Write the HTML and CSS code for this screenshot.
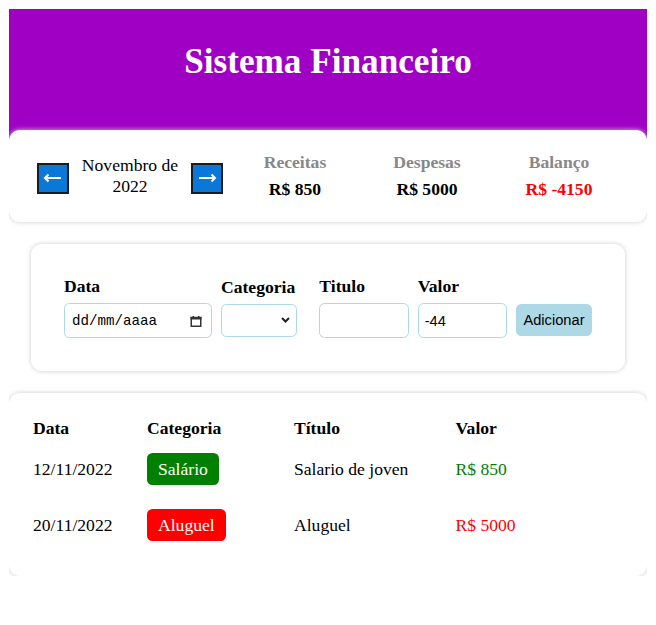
FILE: index.html
```html
<!DOCTYPE html>
<html lang="pt-BR">
<head>
<meta charset="utf-8">
<title>Sistema Financeiro</title>
<link rel="stylesheet" href="styles.css">
</head>
<body>
<header class="header">
  <h1 class="header-title">Sistema Financeiro</h1>
</header>
<main class="page">
  <section class="info-card">
    <div class="month-area">
      <div class="month-arrow">
        <span class="arrow-box">
          <svg class="arrow-icon" viewBox="0 0 28 28" width="28" height="28"><path d="M6 13H22M9.5 9.5L6 13L9.5 16.5" fill="none" stroke="#fff" stroke-width="2"/></svg>
        </span>
      </div>
      <div class="month-title">Novembro de 2022</div>
      <div class="month-arrow">
        <span class="arrow-box">
          <svg class="arrow-icon" viewBox="0 0 28 28" width="28" height="28"><path d="M6 13H22M18.5 9.5L22 13L18.5 16.5" fill="none" stroke="#fff" stroke-width="2"/></svg>
        </span>
      </div>
    </div>
    <div class="resume-area">
      <div class="resume-item">
        <div class="resume-title">Receitas</div>
        <div class="resume-info">R$ 850</div>
      </div>
      <div class="resume-item">
        <div class="resume-title">Despesas</div>
        <div class="resume-info">R$ 5000</div>
      </div>
      <div class="resume-item">
        <div class="resume-title">Balanço</div>
        <div class="resume-info negative">R$ -4150</div>
      </div>
    </div>
  </section>

  <form class="input-card">
    <label class="field field-date">
      <span class="field-title">Data</span>
      <span class="date-input">
        <span class="date-text">dd/mm/aaaa</span>
        <svg class="calendar-icon" viewBox="0 0 12 11" width="12" height="11"><path d="M1.25 1.5H10.75V10.25H1.25Z" fill="none" stroke="#333" stroke-width="1.5"/><rect x="0.5" y="1" width="11" height="2.5" fill="#333"/><rect x="2.5" y="0" width="1.5" height="1.5" fill="#333"/><rect x="8" y="0" width="1.5" height="1.5" fill="#333"/></svg>
      </span>
    </label>
    <label class="field">
      <span class="field-title">Categoria</span>
      <span class="select-wrap">
        <select class="select"><option></option></select>
        <svg class="chevron" viewBox="0 0 9 6" width="9" height="6"><path d="M1 1L4.5 4.5L8 1" fill="none" stroke="#222" stroke-width="2"/></svg>
      </span>
    </label>
    <label class="field">
      <span class="field-title">Titulo</span>
      <input class="text-input" type="text">
    </label>
    <label class="field">
      <span class="field-title">Valor</span>
      <input class="text-input" type="text" value="-44">
    </label>
    <button class="add-btn" type="button">Adicionar</button>
  </form>

  <table class="table">
    <colgroup>
      <col class="col-date">
      <col class="col-cat">
      <col class="col-title">
      <col>
    </colgroup>
    <thead>
      <tr><th>Data</th><th>Categoria</th><th>Título</th><th>Valor</th></tr>
    </thead>
    <tbody>
      <tr>
        <td>12/11/2022</td>
        <td><span class="badge badge-green">Salário</span></td>
        <td>Salario de joven</td>
        <td class="value-green">R$ 850</td>
      </tr>
      <tr>
        <td>20/11/2022</td>
        <td><span class="badge badge-red">Aluguel</span></td>
        <td>Aluguel</td>
        <td class="value-red">R$ 5000</td>
      </tr>
    </tbody>
  </table>
</main>
</body>
</html>
```
FILE: styles.css
```css
html, body {
  background: #fff;
}
body {
  margin: 9px;
  font-family: "Liberation Serif", "Times New Roman", serif;
  font-size: 17.6px;
  color: #000;
}
.header {
  background-color: #a000c4;
  height: 165px;
  text-align: center;
}
.header-title {
  margin: 0;
  padding-top: 33px;
  color: #fff;
  font-size: 35.2px;
  font-weight: bold;
}
.page {
  display: block;
}
.info-card {
  background: #fff;
  border-radius: 11px;
  box-shadow: 0 0 5.5px #ccc;
  padding: 22px;
  margin-top: -44px;
  display: flex;
  align-items: center;
}
.month-area {
  flex: 1;
  display: flex;
  align-items: center;
}
.month-arrow {
  width: 44px;
  display: flex;
  justify-content: center;
}
.arrow-box {
  box-sizing: border-box;
  width: 32px;
  height: 31px;
  margin-top: 5px;
  background: #0a78d8;
  border: 2px solid #1c1c1c;
  display: flex;
}
.arrow-icon {
  display: block;
}
.month-title {
  flex: 1;
  text-align: center;
}
.resume-area {
  flex: 2;
  display: flex;
}
.resume-item {
  flex: 1;
  text-align: center;
  font-weight: bold;
}
.resume-title {
  color: #888;
  margin-bottom: 5.5px;
}
.resume-info.negative {
  color: #ff0000;
}
.input-card {
  background: #fff;
  border-radius: 11px;
  box-shadow: 0 0 5.5px #ccc;
  margin: 22px;
  padding: 32px 33px 33px;
  display: flex;
  align-items: flex-end;
  gap: 9px;
}
.field {
  flex: 1;
  min-width: 0;
  display: flex;
  flex-direction: column;
}
.field-date {
  flex: 0 0 148px;
}
.field-title {
  font-weight: bold;
  margin-bottom: 6.6px;
}
.date-input,
.text-input {
  box-sizing: border-box;
  height: 35px;
  border: 1px solid #add8e6;
  border-radius: 5.5px;
  background: #fff;
}
.date-input {
  display: flex;
  align-items: center;
  justify-content: space-between;
  padding: 0 9px 0 7px;
}
.date-text {
  font-family: "Liberation Mono", "Courier New", monospace;
  font-size: 14.2px;
  color: #000;
}
.calendar-icon {
  display: block;
  margin-top: 1px;
}
.text-input {
  width: 100%;
  padding: 0 6px;
  font-family: "Liberation Sans", Arial, sans-serif;
  font-size: 14.67px;
  color: #000;
  outline: none;
}
.select-wrap {
  position: relative;
  width: 76px;
  margin-bottom: 1px;
}
.select {
  appearance: none;
  -webkit-appearance: none;
  box-sizing: border-box;
  display: block;
  width: 76px;
  height: 33px;
  border: 1px solid #add8e6;
  border-radius: 5.5px;
  background: #fff;
  font-family: "Liberation Sans", Arial, sans-serif;
  font-size: 14.67px;
  outline: none;
}
.chevron {
  position: absolute;
  left: 60px;
  top: 13px;
  pointer-events: none;
}
.add-btn {
  flex: none;
  width: 76px;
  height: 32px;
  margin-bottom: 2px;
  padding: 0;
  border: none;
  border-radius: 5.5px;
  background: #add8e6;
  color: #000;
  font-family: "Liberation Sans", Arial, sans-serif;
  font-size: 14.67px;
}
.table {
  width: 100%;
  table-layout: fixed;
  background: #fff;
  border-radius: 11px;
  box-shadow: 0 0 5.5px #ccc;
  padding: 22px 22px 22px 24px;
  border-collapse: separate;
  border-spacing: 0 2.2px;
  margin-top: 21px;
}
.col-date {
  width: 114px;
}
.col-cat {
  width: 147px;
}
.col-title {
  width: 161.5px;
}
.table th {
  text-align: left;
  font-weight: bold;
  padding: 1px 0;
}
.table td {
  padding: 11px 0;
}
.badge {
  display: inline-block;
  padding: 5.5px 11px;
  border-radius: 5.5px;
  color: #fff;
}
.badge-green {
  background: #008000;
}
.badge-red {
  background: #ff0000;
}
.value-green {
  color: #008000;
}
.value-red {
  color: #ff0000;
}
```
